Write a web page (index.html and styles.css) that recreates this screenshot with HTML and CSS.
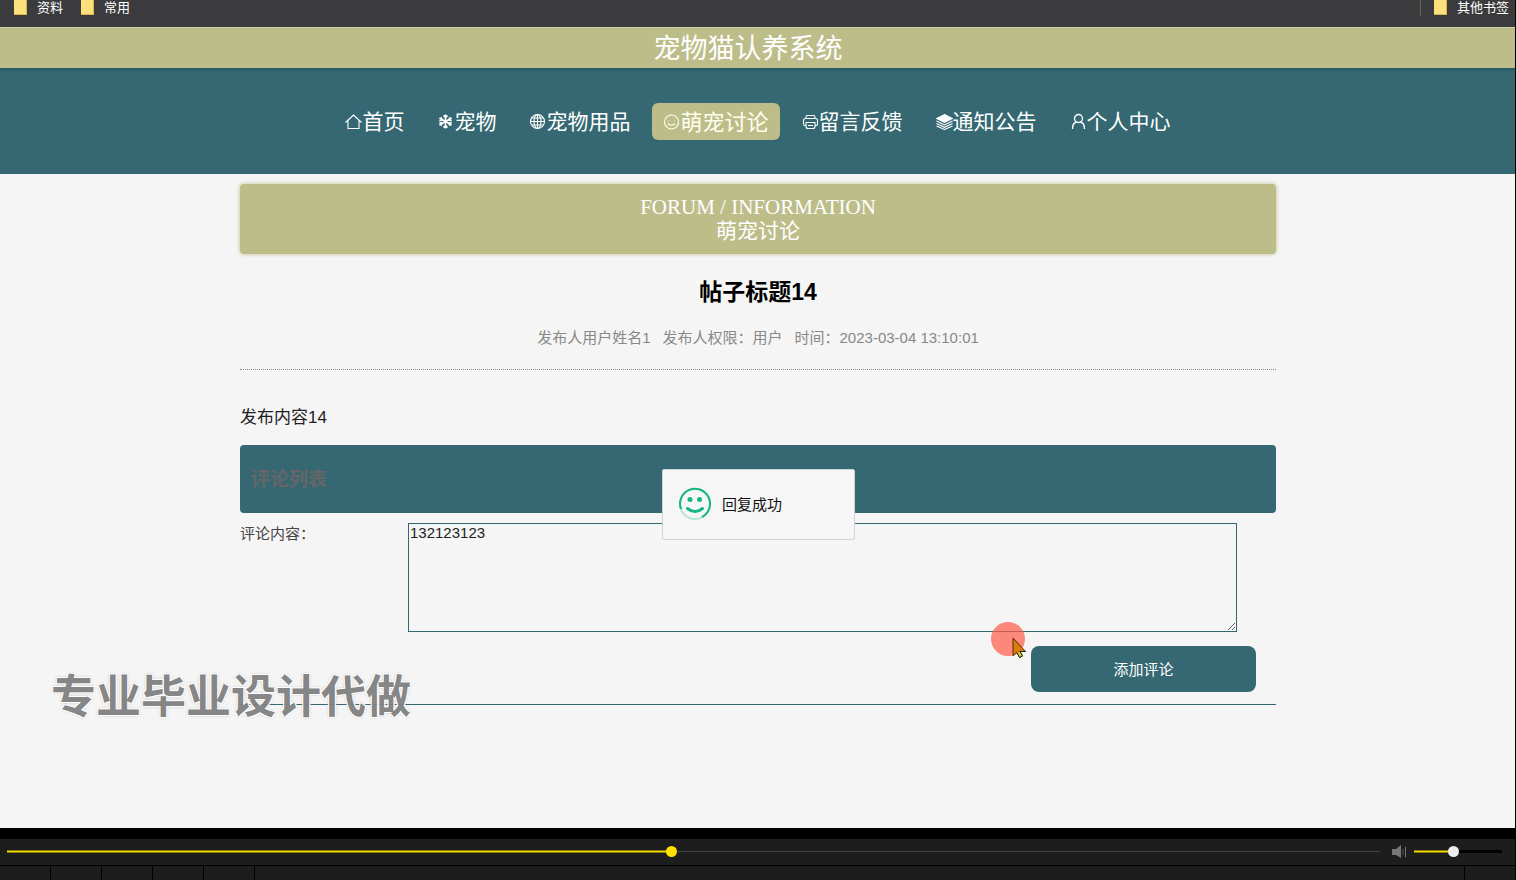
FILE: index.html
```html
<!DOCTYPE html>
<html lang="zh-CN">
<head>
<meta charset="utf-8">
<title>宠物猫认养系统</title>
<link rel="stylesheet" href="styles.css">
</head>
<body>
<div class="bookmarks">
  <a class="bookmark" href="#"><span class="folder"></span>资料</a>
  <a class="bookmark" href="#"><span class="folder"></span>常用</a>
  <a class="bookmark bookmark-other" href="#"><span class="folder"></span>其他书签</a>
</div>
<header>
  <div class="site-title">宠物猫认养系统</div>
  <nav class="nav">
    <a class="nav-item" href="#"><svg class="icon" viewBox="0 0 17 17"><path d="M.5 9.500 8.500 2 16.500 9.500M3 8V15.500H14V8"/></svg>首页</a>
    <a class="nav-item" href="#"><svg class="icon" viewBox="0 0 17 17"><path class="heavy" d="M8.500 1.500V15.500M2.400 5 14.600 12M14.600 5 2.400 12M6.500 2.500 8.500 4.500 10.500 2.500M6.500 14.500 8.500 12.500 10.500 14.500M2.300 7.500 5 7 4.200 4.200M14.700 7.500 12 7 12.800 4.200M2.300 9.500 5 10 4.200 12.800M14.700 9.500 12 10 12.800 12.800"/></svg>宠物</a>
    <a class="nav-item" href="#"><svg class="icon" viewBox="0 0 17 17"><circle cx="8.500" cy="8.500" r="7"/><ellipse cx="8.500" cy="8.500" rx="3.500" ry="7"/><path d="M8.500 1.500V15.500M1.500 8.500H15.500M2.700 5H14.300M2.700 12H14.300"/></svg>宠物用品</a>
    <a class="nav-item nav-active" href="#"><svg class="icon" viewBox="0 0 17 17"><circle cx="8.500" cy="9" r="7"/><path d="M5 10.500Q8.500 14 12 10.500M5.500 7V7.600M11.500 7V7.600"/></svg>萌宠讨论</a>
    <a class="nav-item" href="#"><svg class="icon" viewBox="0 0 17 17"><path d="M4 5.500V4Q4 2.500 5.500 2.500H11.500Q13 2.500 13 4V5.500M4 12.500H3Q1.500 12.500 1.500 11V7.500Q1.500 5.500 3.500 5.500H13.500Q15.500 5.500 15.500 7.500V11Q15.500 12.500 14 12.500H13M4 9.500H13V13.500Q13 15.500 11 15.500H6Q4 15.500 4 13.500ZM6 12.500H11"/></svg>留言反馈</a>
    <a class="nav-item" href="#"><svg class="icon" viewBox="0 0 17 17"><path class="solid" d="M8.500 1.500 16.500 5.500 8.500 9.500 .5 5.500Z"/><path d="M.5 8 8.500 12 16.500 8M.5 10.500 8.500 14.300 16.500 10.500M.5 13 8.500 16.500 16.500 13"/></svg>通知公告</a>
    <a class="nav-item" href="#"><svg class="icon" viewBox="0 0 17 17"><circle class="medium" cx="8.500" cy="5.500" r="4"/><path class="medium" d="M2.500 16Q2.500 10 6.500 9M10.500 9Q14.500 10 14.500 16"/></svg>个人中心</a>
  </nav>
</header>
<main class="page">
  <div class="banner"><div>FORUM / INFORMATION</div><div>萌宠讨论</div></div>
  <h1 class="post-title">帖子标题14</h1>
  <div class="meta"><span>发布人用户姓名1</span><span>发布人权限：用户</span><span>时间：2023-03-04 13:10:01</span></div>
  <p class="post-body">发布内容14</p>
  <h2 class="comments-head">评论列表</h2>
  <form class="comment-form">
    <div class="field">
      <label class="field-label" for="comment">评论内容：</label>
      <textarea class="field-input" id="comment">132123123</textarea>
    </div>
    <button class="submit" type="button">添加评论</button>
  </form>
  <div class="toast" role="status">
    <svg class="toast-icon" viewBox="0 0 34 34"><circle class="ring-pale" cx="17" cy="17" r="15"/><path class="ring" d="M3 22A15 15 0 1 1 24 30"/><circle class="eye" cx="12" cy="12.500" r="2.500"/><circle class="eye" cx="21.500" cy="12.500" r="2.500"/><path class="smile" d="M9.500 21.500Q17 27.500 24.500 21.500"/></svg>
    <span>回复成功</span>
  </div>
</main>
<div class="watermark">专业毕业设计代做</div>
<svg class="pointer" viewBox="0 0 36 38"><circle class="halo" cx="17" cy="17" r="17"/><path class="arrow" d="M22 16V34L26 30.500 28.500 35.500 31.500 34 29 29.500H34.500Z"/><path class="arrow-tip" d="M26 30.500 28.500 35.500 31.500 34 29 29.500H34.500"/></svg>
<footer class="player">
  <div class="controls">
    <input class="slider seek" type="range" min="0" max="1000" value="484" aria-label="播放进度" style="--fill:48.4%">
    <svg class="speaker" viewBox="0 0 16 14"><path class="cone" d="M0 4H4L9 0V13L4 10H0Z"/><path class="wave-dim" d="M11 4V10"/><path class="wave" d="M13.500 2V12"/></svg>
    <input class="slider volume" type="range" min="0" max="1000" value="440" aria-label="音量" style="--fill:44%">
  </div>
  <div class="cells"><i></i><i></i><i></i><i></i><i></i><i class="cell-wide"></i><i></i></div>
</footer>
</body>
</html>
```

FILE: styles.css
```css
* { box-sizing: border-box; }
body {
  margin: 0;
  min-height: 100vh;
  display: flex;
  flex-direction: column;
  position: relative;
  background: #f5f5f5;
  font-family: "Liberation Sans", "Noto Sans CJK SC", sans-serif;
  font-size: 15px;
  color: #333;
}
body::after {
  content: "";
  position: absolute;
  top: 0;
  right: 0;
  bottom: 0;
  width: 1px;
  background: #000;
}
a { color: inherit; text-decoration: none; }

.bookmarks {
  display: flex;
  gap: 18px;
  height: 27px;
  padding: 0 7px 0 14px;
  background: #3b3b3d;
  color: #fff;
  font-size: 13px;
  line-height: 15px;
}
.bookmark { display: flex; gap: 10px; height: 16px; }
.bookmark-other { margin-left: auto; padding-left: 13px; border-left: 1px solid #666; }
.folder {
  width: 13px;
  height: 15px;
  background: #fbe07c;
  border-right: 1px solid #d9b548;
  border-bottom: 1px solid #d9b548;
}

.site-title {
  height: 41px;
  line-height: 42px;
  background: #bdbd8a;
  border-top: 1px solid #cfcfaa;
  color: #fff;
  font-size: 27px;
  text-align: center;
  padding-right: 20px;
}
.nav {
  display: flex;
  justify-content: center;
  align-items: center;
  gap: 11px;
  height: 106px;
  background: linear-gradient(#285862, #356872 4px);
  color: #fff;
  font-size: 21px;
}
.nav-item {
  display: flex;
  align-items: center;
  height: 37px;
  padding: 0 11px 2px;
  border-radius: 6px;
}
.nav-active { background: #bdbd8a; font-size: 22px; color: #fffff0; }
.icon {
  width: 17px;
  height: 17px;
  margin-top: 2px;
  fill: none;
  stroke: currentColor;
  stroke-width: 1.1;
}
.medium { stroke-width: 1.4; }
.heavy { stroke-width: 1.6; }
.solid { fill: currentColor; }

.page {
  flex: 1;
  position: relative;
  width: 100%;
  max-width: 1036px;
  margin: 0 auto;
  padding-top: 10px;
}
.banner {
  padding: 11px 0;
  border-radius: 4px;
  background: #bdbd8a;
  box-shadow: 0 0 4px #bdbd8a;
  color: #fff;
  font: 21px/24px "Liberation Serif", "Noto Sans CJK SC", serif;
  text-align: center;
}
.post-title {
  margin: 20px 0 0;
  font-size: 23px;
  line-height: 36px;
  color: #000;
  text-align: center;
}
.meta {
  display: flex;
  justify-content: center;
  gap: 12px;
  padding: 16px 0 19px;
  line-height: 24px;
  color: #888;
  border-bottom: 1px dotted #888;
}
.post-body { margin: 35px 0 14px; font-size: 17px; line-height: 26px; color: #222; }
.comments-head {
  margin: 0;
  padding: 2px 11px 0;
  border-radius: 4px;
  background: #356872;
  color: #666668;
  font-size: 19px;
  line-height: 66px;
}
.comment-form {
  display: flex;
  flex-direction: column;
  padding: 10px 0 12px;
  border-bottom: 1px solid #356872;
}
.field { display: flex; }
.field-label { width: 168px; line-height: 22px; color: #444; }
.field-input {
  width: 80%;
  height: 109px;
  padding: 0 1px;
  border: 1px solid #356872;
  background: transparent;
  font: inherit;
  color: #222;
}
.submit {
  align-self: flex-end;
  width: 225px;
  height: 46px;
  margin: 14px 20px 0 0;
  padding: 0 0 2px;
  border: 0;
  border-radius: 8px;
  background: #356872;
  color: #fff;
  font: inherit;
}
.toast {
  position: absolute;
  top: 295px;
  left: 50%;
  margin-left: -96px;
  width: 193px;
  height: 71px;
  display: flex;
  align-items: center;
  gap: 10px;
  padding: 0 15px 2px;
  background: #f6f6f6;
  border: 1px solid #d0d4d4;
  border-radius: 2px;
  color: #111;
}
.toast-icon { width: 34px; height: 34px; fill: none; }
.ring-pale { stroke: #b8e4d5; stroke-width: 2; }
.ring { stroke: #16b585; stroke-width: 2; }
.eye { fill: #16b585; }
.smile { stroke: #16b585; stroke-width: 3; stroke-linecap: round; }

.watermark {
  position: absolute;
  left: 51px;
  top: 661px;
  font: bold 45px/66px "Noto Sans CJK SC", sans-serif;
  color: #808080;
  opacity: 0.94;
  text-shadow: 1px 1px #fff, -1px -1px #fff, 1px -1px #fff, -1px 1px #fff, 0 0 3px #888;
}
.pointer { position: absolute; left: 991px; top: 622px; width: 36px; height: 38px; }
.halo { fill: #ff5a48; fill-opacity: 0.7; }
.arrow { fill: #d97b08; stroke: #5a2a08; }
.arrow-tip { fill: #d8d820; stroke: #222; }

.player { background: #1d1d1d; border-top: 11px solid #000; }
.controls {
  display: flex;
  align-items: center;
  height: 27px;
  padding: 0 14px 1px 7px;
  border-bottom: 1px solid #000;
}
.slider {
  appearance: none;
  height: 11px;
  margin: 0;
  background: linear-gradient(#f5d800, #f5d800) 0 50% / var(--fill) 1px no-repeat,
    linear-gradient(#8c7c08, #8c7c08) 0 50% / var(--fill) 3px no-repeat,
    linear-gradient(var(--rail), var(--rail)) 0 50% / 100% var(--rail-size) no-repeat;
}
.slider::-webkit-slider-thumb {
  appearance: none;
  width: 11px;
  height: 11px;
  border-radius: 50%;
  background: var(--knob);
}
.seek { flex: 1; --rail: #444; --rail-size: 1px; --knob: #ffe100; }
.volume { width: 88px; --rail: #000; --rail-size: 3px; --knob: #eee; }
.speaker { width: 16px; height: 14px; margin: 0 6px 0 12px; fill: none; stroke: #777; }
.cone { fill: #777; stroke: none; }
.wave-dim { stroke: #555; }
.cells { display: flex; height: 14px; }
.cells i { width: 51px; border-right: 1px solid #000; }
.cells i:last-child { border-right: 0; }
.cells .cell-wide { flex: 1; }
```
